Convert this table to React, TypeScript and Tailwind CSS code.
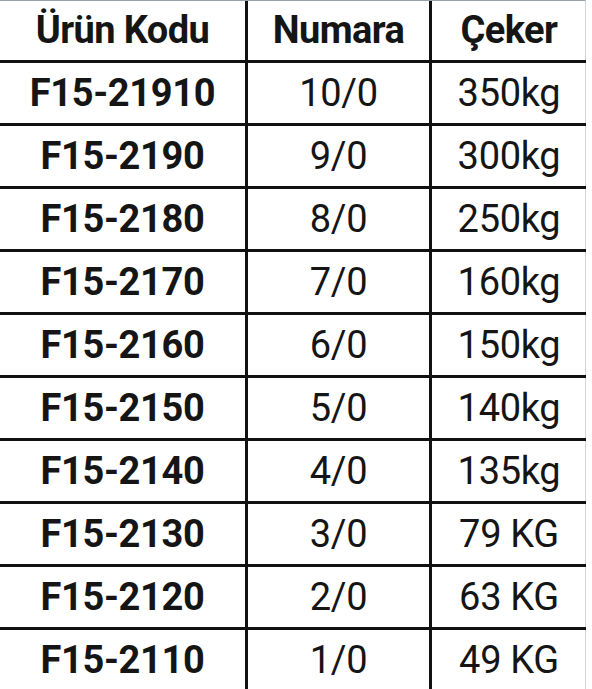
import React from 'react';

const rows: [string, string, string][] = [
  ['F15-21910', '10/0', '350kg'],
  ['F15-2190', '9/0', '300kg'],
  ['F15-2180', '8/0', '250kg'],
  ['F15-2170', '7/0', '160kg'],
  ['F15-2160', '6/0', '150kg'],
  ['F15-2150', '5/0', '140kg'],
  ['F15-2140', '4/0', '135kg'],
  ['F15-2130', '3/0', '79 KG'],
  ['F15-2120', '2/0', '63 KG'],
  ['F15-2110', '1/0', '49 KG'],
];

const App: React.FC = () => {
  return (
    <div className="w-[592px] h-[689px] overflow-hidden bg-white text-[#151515] font-['Roboto',sans-serif]">
      <div className="grid grid-cols-[248px_184px_154px] w-[586px] border-t border-gray-400 border-r border-r-gray-300">
        {/* Header */}
        <div className="h-[62px] flex items-center justify-center border-r-[3px] border-b-[3px] border-[#111] text-[38px] font-bold tracking-[-0.6px]">
          Ürün Kodu
        </div>
        <div className="h-[62px] flex items-center justify-center border-r-[3px] border-b-[3px] border-[#111] text-[38px] font-bold tracking-[-0.6px]">
          Numara
        </div>
        <div className="h-[62px] flex items-center justify-center border-b-[3px] border-[#111] text-[38px] font-bold tracking-[-0.6px]">
          Çeker
        </div>

        {/* Body */}
        {rows.map(([code, num, pull], i) => (
          <React.Fragment key={i}>
            <div className="h-[63px] flex items-center justify-center border-r-[3px] border-b-[3px] border-[#111] text-[38px] font-bold tracking-[-0.3px]">
              {code}
            </div>
            <div className="h-[63px] flex items-center justify-center border-r-[3px] border-b-[3px] border-[#111] text-[38px] tracking-[-0.3px]">
              {num}
            </div>
            <div className="h-[63px] flex items-center justify-center border-b-[3px] border-[#111] text-[38px] tracking-[-0.3px]">
              {pull}
            </div>
          </React.Fragment>
        ))}
      </div>
    </div>
  );
};

export default App;
